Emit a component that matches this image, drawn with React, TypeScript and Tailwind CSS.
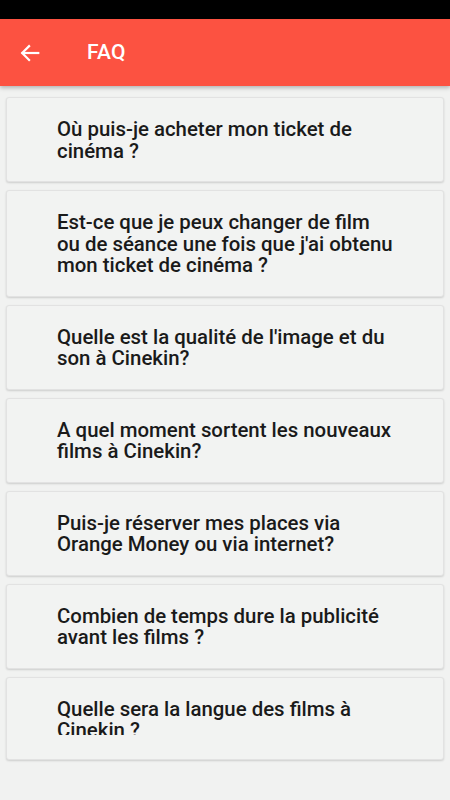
import React from "react";

const questions = [
  "Où puis-je acheter mon ticket de cinéma ?",
  "Est-ce que je peux changer de film ou de séance une fois que j'ai obtenu mon ticket de cinéma ?",
  "Quelle est la qualité de l'image et du son à Cinekin?",
  "A quel moment sortent les nouveaux films à Cinekin?",
  "Puis-je réserver mes places via Orange Money ou via internet?",
  "Combien de temps dure la publicité avant les films ?",
];

export default function App() {
  return (
    <div
      className="w-[450px] h-[800px] overflow-hidden bg-[#f1f2f1] flex flex-col"
      style={{ fontFamily: "Roboto, 'Noto Sans', sans-serif" }}
    >
      <div className="h-[19px] bg-black shrink-0" />
      <div className="h-[67px] bg-[#fc5241] flex items-center shrink-0 shadow-[0_2px_4px_rgba(0,0,0,0.25)] relative z-10">
        <div className="w-[62px] pl-[19px] flex items-center">
          <svg width="22" height="22" viewBox="0 0 24 24" fill="none" stroke="white" strokeWidth="2.4" strokeLinecap="square">
            <path d="M21 12H4" />
            <path d="M11 4.5L3.5 12L11 19.5" />
          </svg>
        </div>
        <div className="pl-[25px] text-white text-[21px] font-medium tracking-[0.2px]">FAQ</div>
      </div>
      <div className="flex flex-col gap-[8px] pt-[11px] px-[6px]">
        {questions.map((q) => (
          <div
            key={q}
            className="bg-[#f2f3f2] border border-[#e2e2e2] rounded-[3px] shadow-[0_1px_2px_rgba(0,0,0,0.15)] pl-[50px] pt-[21px] pb-[19px]"
          >
            <div className="w-[339px] text-[20.4px] leading-[21.5px] font-medium text-[#1a1a1a]">{q}</div>
          </div>
        ))}
        <div className="bg-[#f2f3f2] border border-[#e2e2e2] rounded-[3px] shadow-[0_1px_2px_rgba(0,0,0,0.15)] pl-[50px] pt-[21px] h-[83px]">
          <div className="w-[339px] h-[36px] overflow-hidden text-[20.4px] leading-[21.5px] font-medium text-[#1a1a1a]">
            Quelle sera la langue des films à Cinekin ?
          </div>
        </div>
      </div>
    </div>
  );
}
